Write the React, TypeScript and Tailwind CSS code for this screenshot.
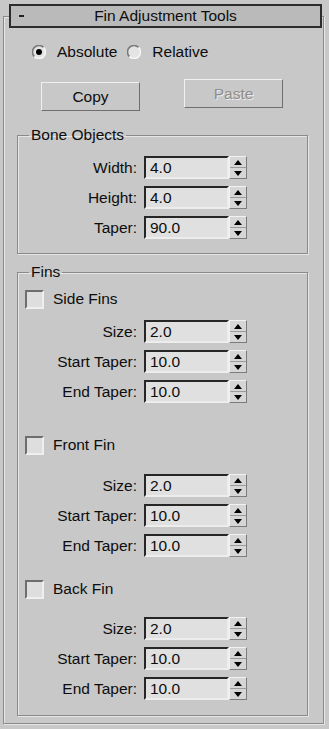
import React from "react";

function Radio({ checked }: { checked: boolean }) {
  return (
    <svg width="14" height="14" viewBox="0 0 14 14" className="shrink-0">
      <circle cx="7" cy="7" r="6.5" fill="#e4e4e4" />
      <path d="M2.4 11.6 A6.5 6.5 0 0 1 11.6 2.4" fill="none" stroke="#7a7a7a" strokeWidth="1.6" />
      <path d="M11.6 2.4 A6.5 6.5 0 0 1 2.4 11.6" fill="none" stroke="#f4f4f4" strokeWidth="1.6" />
      {checked && <circle cx="7" cy="7" r="3" fill="#000" />}
    </svg>
  );
}

function Checkbox() {
  return (
    <div className="w-[19px] h-[19px] shrink-0 bg-[#dedede] border-2 border-t-[#6e6e6e] border-l-[#6e6e6e] border-b-[#efefef] border-r-[#efefef]" />
  );
}

function Spinner({ label, value }: { label: string; value: string }) {
  return (
    <div className="flex items-center h-[23px]">
      <div className="w-[119px] text-right">{label}</div>
      <div className="ml-[7px] w-[85px] h-[23px] bg-[#e0e0e0] border-2 border-t-[#262626] border-l-[#262626] border-b-[#ededed] border-r-[#ededed] pl-[4px] leading-[19px]">
        {value}
      </div>
      <div className="w-[18px] h-[23px] flex flex-col border border-t-[#f2f2f2] border-l-[#f2f2f2] border-b-[#7c7c7c] border-r-[#7c7c7c] bg-[#d6d6d6]">
        <div className="flex-1 flex items-center justify-center border-b border-[#9a9a9a]">
          <svg width="8" height="5" viewBox="0 0 8 5">
            <path d="M0 5 L4 0 L8 5 Z" fill="#000" />
          </svg>
        </div>
        <div className="flex-1 flex items-center justify-center">
          <svg width="8" height="5" viewBox="0 0 8 5">
            <path d="M0 0 L4 5 L8 0 Z" fill="#000" />
          </svg>
        </div>
      </div>
    </div>
  );
}

function CheckRow({ label }: { label: string }) {
  return (
    <div className="flex items-center h-[20px] pl-[7px]">
      <Checkbox />
      <span className="ml-[9px]">{label}</span>
    </div>
  );
}

const etched =
  "border border-[#8a8a8a] shadow-[1px_1px_0_#e6e6e6,inset_1px_1px_0_#e6e6e6]";

export default function App() {
  return (
    <div className="w-[329px] h-[729px] bg-[#c8c8c8] pt-[16px] text-[15.5px] text-[#0d0d0d] font-['Liberation_Sans',Arial,sans-serif] overflow-hidden">
      <div className={`ml-[3px] w-[321px] h-[708px] ${etched}`}>
        {/* rollout title */}
        <div className="ml-[5px] -mt-[13px] w-[313px] h-[24px] bg-[#bababa] border-2 border-[#2c2c2c] flex items-center relative">
          <span className="absolute left-[8px] top-[9px] w-[5px] h-[2px] bg-[#222]" />
          <span className="flex-1 text-center leading-[20px]">Fin Adjustment Tools</span>
        </div>

        <div className="flex items-center h-[20px] mt-[14px] pl-[28px]">
          <Radio checked />
          <span className="ml-[11px]">Absolute</span>
          <span className="ml-[10px]">
            <Radio checked={false} />
          </span>
          <span className="ml-[11px]">Relative</span>
        </div>

        <div className="flex items-start mt-[17px]">
          <button className="ml-[37px] mt-[3px] w-[99px] h-[29px] bg-[#c8c8c8] border border-t-[#f0f0f0] border-l-[#f0f0f0] border-b-[#6f6f6f] border-r-[#6f6f6f]">
            Copy
          </button>
          <button className="ml-[44px] w-[99px] h-[29px] bg-[#c8c8c8] border border-t-[#f0f0f0] border-l-[#f0f0f0] border-b-[#6f6f6f] border-r-[#6f6f6f] text-[#8e8e8e] [text-shadow:1px_1px_0_#ececec]">
            Paste
          </button>
        </div>

        <fieldset className={`ml-[13px] mt-[15px] w-[291px] pt-[12px] pb-[14px] ${etched}`}>
          <legend className="ml-[11px] px-[2px] leading-[18px]">Bone Objects</legend>
          <div className="flex flex-col gap-[7px]">
            <Spinner label="Width:" value="4.0" />
            <Spinner label="Height:" value="4.0" />
            <Spinner label="Taper:" value="90.0" />
          </div>
        </fieldset>

        <fieldset className={`ml-[13px] mt-[9px] w-[291px] pt-[8px] pb-[15px] ${etched}`}>
          <legend className="ml-[11px] px-[2px] leading-[18px]">Fins</legend>

          <CheckRow label="Side Fins" />
          <div className="flex flex-col gap-[7px] mt-[11px]">
            <Spinner label="Size:" value="2.0" />
            <Spinner label="Start Taper:" value="10.0" />
            <Spinner label="End Taper:" value="10.0" />
          </div>

          <div className="mt-[32px]">
            <CheckRow label="Front Fin" />
          </div>
          <div className="flex flex-col gap-[7px] mt-[19px]">
            <Spinner label="Size:" value="2.0" />
            <Spinner label="Start Taper:" value="10.0" />
            <Spinner label="End Taper:" value="10.0" />
          </div>

          <div className="mt-[22px]">
            <CheckRow label="Back Fin" />
          </div>
          <div className="flex flex-col gap-[7px] mt-[18px]">
            <Spinner label="Size:" value="2.0" />
            <Spinner label="Start Taper:" value="10.0" />
            <Spinner label="End Taper:" value="10.0" />
          </div>
        </fieldset>
      </div>
    </div>
  );
}
